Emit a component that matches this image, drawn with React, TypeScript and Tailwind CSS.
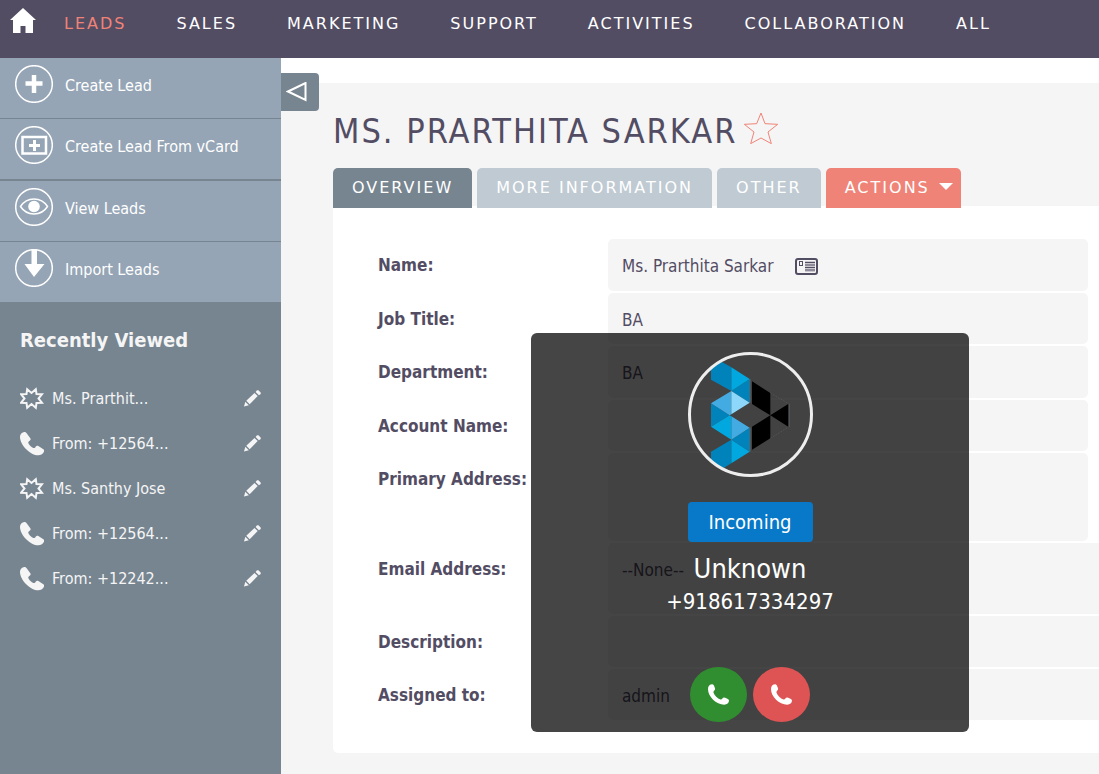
import type { ReactNode } from "react";

const navItems = ["Leads", "Sales", "Marketing", "Support", "Activities", "Collaboration", "All"];

const menuItems = [
  { label: "Create Lead", icon: <PlusIcon /> },
  { label: "Create Lead From vCard", icon: <VCardIcon /> },
  { label: "View Leads", icon: <EyeIcon /> },
  { label: "Import Leads", icon: <ImportIcon /> },
];

const recentItems = [
  { label: "Ms. Prarthit...", type: "lead" },
  { label: "From: +12564...", type: "call" },
  { label: "Ms. Santhy Jose", type: "lead" },
  { label: "From: +12564...", type: "call" },
  { label: "From: +12242...", type: "call" },
];

const fields: { label: string; value: ReactNode; height: string; wide?: boolean }[] = [
  {
    label: "Name:",
    value: (
      <>
        Ms. Prarthita Sarkar
        <button aria-label="Download vCard" className="ml-[22px]">
          <CardIcon />
        </button>
      </>
    ),
    height: "h-[52px]",
  },
  { label: "Job Title:", value: "BA", height: "h-[51px]" },
  { label: "Department:", value: "BA", height: "h-[52px]" },
  { label: "Account Name:", value: "", height: "h-[51px]" },
  { label: "Primary Address:", value: "", height: "h-[88px]" },
  { label: "Email Address:", value: "--None--", height: "h-[71px]", wide: true },
  { label: "Description:", value: "", height: "h-[51px]", wide: true },
  { label: "Assigned to:", value: "admin", height: "h-[51px]", wide: true },
];

function HomeIcon() {
  return (
    <svg viewBox="0 0 26 26" className="h-[26px] w-[26px]" fill="currentColor">
      <path d="M13 0 26 12h-3v13h-7.500v-7h-5v7H3V12H0z" />
    </svg>
  );
}

function RoundIcon({ children }: { children: ReactNode }) {
  return (
    <svg viewBox="0 0 38 38" className="h-[38px] w-[38px] shrink-0" fill="none" stroke="white">
      <circle cx="19" cy="19" r="18.300" strokeWidth="1.500" />
      {children}
    </svg>
  );
}

function PlusIcon() {
  return (
    <RoundIcon>
      <path d="M19 10v18M10.500 18.500h17" strokeWidth="4.500" />
    </RoundIcon>
  );
}

function VCardIcon() {
  return (
    <RoundIcon>
      <rect x="7.500" y="11" width="23.500" height="16.500" strokeWidth="2.500" />
      <path d="M19.500 14v11M14 19.500h11" strokeWidth="3" />
    </RoundIcon>
  );
}

function EyeIcon() {
  return (
    <RoundIcon>
      <path d="M5.500 18.500C12 8.500 26 8.500 32.500 18.500 26 28.500 12 28.500 5.500 18.500z" strokeWidth="1.500" />
      <circle cx="19" cy="18.500" r="5.800" fill="white" stroke="none" />
    </RoundIcon>
  );
}

function ImportIcon() {
  return (
    <RoundIcon>
      <path d="M16.500 0h5.500v15h7.500L19 28 9.500 15h7z" fill="white" stroke="none" />
    </RoundIcon>
  );
}

function BurstIcon() {
  return (
    <svg viewBox="0 0 24 24" className="h-6 w-6" fill="none" stroke="currentColor" strokeWidth="2">
      <path d="M7.200 2.300 11.500 6l4.300-3.700.7 4.700 5.500.2-3.500 4.300 3.500 4.300-5.500.2-.7 4.700-4.300-3.700-4.300 3.700-.7-4.700-5.500-.2 3.500-4.300L1 7.200l5.500-.2z" />
    </svg>
  );
}

function HandsetIcon() {
  return (
    <svg viewBox="0 0 72 72" className="h-6 w-6" fill="currentColor">
      <path d="M0 14C0 7 6 1 13 0c3 0 5 1 7 4l11 15c2 3 1 5-2 7-5 4-5 6-3 9 4 6 8 10 14 13 3 1 5 0 7-4 2-3 5-4 8-2l15 10c3 2 3 5 1 9-3 6-9 9-16 9C32 70 0 40 0 14z" />
    </svg>
  );
}

function CallIcon() {
  return (
    <svg viewBox="0 0 62 62" className="h-[21px] w-[21px]" fill="currentColor">
      <path d="M0 15C0 7 5 1 13 1c4 0 7 9 8 13 1 5-6 6-5 11 3 9 12 18 21 21 5 1 6-7 11-6 6 1 14 5 14 9 0 8-6 12-14 12C24 61 0 38 0 15z" />
    </svg>
  );
}

function PencilIcon() {
  return (
    <svg viewBox="0 0 17 17" className="h-[17px] w-[17px]" fill="currentColor">
      <path d="M0 16.500 1.300 11.800 4.800 15.300z" />
      <path d="M2.300 10.800 10.500 2.900 13.700 6.100 5.700 14.200z" />
      <path d="M11.600 1.900 12.800.6c.6-.6 1.300-.6 1.900 0L16.400 2.300c.6.6.6 1.300 0 1.900l-1.500 1z" />
    </svg>
  );
}

function StarIcon() {
  return (
    <svg viewBox="0 0 102 94" className="h-[32px] w-[34px]" fill="none" stroke="#f08377" strokeWidth="3">
      <path d="M51 2 63 34l38 2-29 23 10 35-31-17-31 17 10-35L1 36l37-2z" />
    </svg>
  );
}

function CardIcon() {
  return (
    <svg viewBox="0 0 23 17" className="block h-[17px] w-[23px]" fill="none" stroke="#534d64">
      <path d="M10 3h10v11H10z" fill="#534d64" fillOpacity=".25" stroke="none" />
      <rect x="1" y="1" width="21" height="15" rx="2" strokeWidth="2" />
      <rect x="4.500" y="3.500" width="3" height="4" />
      <path d="M10 4.500h10M10 7h10M10 9.500h10M10 12h10" strokeWidth="1.200" />
    </svg>
  );
}

function CallerLogo() {
  return (
    <svg viewBox="21 21 375 375" className="h-[125px] w-[125px]">
      <clipPath id="caller">
        <circle cx="208.500" cy="208.500" r="180" />
      </clipPath>
      <g clipPath="url(#caller)">
        <path fill="#0083ba" d="M90 32 151 67V138L90 104zM206 102V173L151 138zM90 175 146 211 90 245zM206 248V320L151 284zM151 284V355L90 392V320z" />
        <path fill="#00a8df" d="M151 67 206 102 151 138zM90 245 146 211 151 214V284zM151 284 206 320 151 355z" />
        <path fill="#44aae2" d="M151 138V208L146 211 90 175zM151 214 206 248 151 284z" />
        <path fill="#8dd8fa" d="M151 138 206 173 151 208z" />
        <path fill="#000" d="M213 109 268 144V211L213 177zM268 211 323 176V246zM213 245 268 211V280L213 314z" />
        <path fill="none" stroke="#777" strokeDasharray="5 4" d="M268 144 323 176M268 280 323 246" />
        <path fill="none" stroke="#6f7a80" strokeWidth="2" d="M207 102V173M207 248V320M324 176V246" />
      </g>
      <circle cx="208.500" cy="208.500" r="183" fill="none" stroke="#eee" strokeWidth="9" />
    </svg>
  );
}

function Sidebar() {
  return (
    <aside className="w-[281px] shrink-0 bg-[#778591] text-[#f5f5f5]">
      <ul className="bg-[#95a5b5] text-white">
        {menuItems.map((item) => (
          <li key={item.label} className="border-b border-[#778591] last:border-b-0 nth-2:border-b-2">
            <a href="#" className="flex h-[60px] items-start gap-3 px-[15px] pt-[7px]">
              {item.icon}
              <span className="pt-[9px] leading-6">{item.label}</span>
            </a>
          </li>
        ))}
      </ul>
      <div className="px-5 pt-[22px]">
        <h2 className="mb-5 text-xl font-bold leading-8">Recently Viewed</h2>
        <ul>
          {recentItems.map((item, index) => (
            <li key={index} className="flex h-[45px] items-center">
              {item.type === "lead" ? <BurstIcon /> : <HandsetIcon />}
              <a href="#" className="ml-2 flex-1">
                {item.label}
              </a>
              <button aria-label="Edit">
                <PencilIcon />
              </button>
            </li>
          ))}
        </ul>
      </div>
    </aside>
  );
}

function IncomingCall() {
  return (
    <div
      role="dialog"
      aria-label="Incoming call"
      className="absolute right-[130px] top-[333px] flex h-[399px] w-[438px] flex-col items-center rounded-[6px] bg-black/73 pt-[19px] text-white"
    >
      <CallerLogo />
      <button className="mt-[25px] h-10 w-[125px] rounded-[4px] bg-[#0879c9] text-xl">Incoming</button>
      <p className="mt-[10px] text-[27px] leading-[34px]">Unknown</p>
      <p className="text-[22px] leading-8">+918617334297</p>
      <div className="mt-[49px] flex gap-[6px]">
        <button
          aria-label="Answer"
          className="flex h-[55px] w-[57px] items-center justify-center rounded-[50%] bg-[#308e30]"
        >
          <CallIcon />
        </button>
        <button
          aria-label="Decline"
          className="flex h-[55px] w-[57px] items-center justify-center rounded-[50%] bg-[#de5455]"
        >
          <CallIcon />
        </button>
      </div>
    </div>
  );
}

export default function App() {
  const tab = "h-10 rounded-t-[5px] px-[19px] tracking-[2px] uppercase";

  return (
    <div className="relative flex min-h-screen flex-col overflow-x-hidden bg-[#f5f5f5] font-['DejaVu_Sans_Condensed','DejaVu_Sans',sans-serif] text-base text-[#534d64]">
      <header className="flex h-[58px] shrink-0 bg-[#534d64] pl-[10px] pt-2 text-white">
        <a href="#" aria-label="Home">
          <HomeIcon />
        </a>
        <nav className="ml-7 flex gap-[50px] font-['DejaVu_Sans',sans-serif] leading-8 tracking-[2px] uppercase">
          {navItems.map((item) => (
            <a key={item} href="#" className={item === "Leads" ? "text-[#f08377]" : ""}>
              {item}
            </a>
          ))}
        </nav>
      </header>

      <div className="flex flex-1">
        <Sidebar />
        <main className="min-w-0 flex-1">
          <div className="h-[25px] bg-white" />
          <div className="flex">
            <button
              aria-label="Collapse sidebar"
              className="-mt-[10px] flex h-[38px] w-[38px] shrink-0 items-center rounded-r-[4px] bg-[#778591] pl-[5px]"
            >
              <svg viewBox="0 0 21 20" className="h-5 w-[21px]" fill="none" stroke="white" strokeWidth="2">
                <path d="M2 9.500 19.500 1v17z" />
              </svg>
            </button>
            <div className="ml-[14px] min-w-0 flex-1">
              <div className="flex h-[85px] items-center gap-[7px] pt-[10px]">
                <h1 className="whitespace-nowrap text-[34px] leading-10 tracking-[2px] uppercase">Ms. Prarthita Sarkar</h1>
                <button aria-label="Add to favorites" className="mb-[6px]">
                  <StarIcon />
                </button>
              </div>
              <div className="relative z-10 -mb-[2px] flex gap-[5px] font-['DejaVu_Sans',sans-serif] text-white">
                <button className={`${tab} bg-[#778591]`}>Overview</button>
                <button className={`${tab} bg-[#bfcad3]`}>More Information</button>
                <button className={`${tab} bg-[#bfcad3]`}>Other</button>
                <button className="flex h-10 items-center gap-[9px] rounded-t-[5px] bg-[#f08377] pl-[19px] pr-2 tracking-[2px] uppercase">
                  Actions
                  <svg viewBox="0 0 14 7" className="mb-1 h-[7px] w-[14px]" fill="currentColor">
                    <path d="M0 0h14L7 7z" />
                  </svg>
                </button>
              </div>
              <dl className="flex flex-col gap-[2px] rounded-bl-[5px] bg-white pb-[33px] pl-[45px] pt-[33px] text-[17px]">
                {fields.map((field) => (
                  <div key={field.label} className={`flex ${field.height} ${field.wide ? "" : "pr-[11px]"}`}>
                    <dt className="w-[230px] shrink-0 whitespace-nowrap pt-[14px] font-bold leading-6">{field.label}</dt>
                    <dd
                      className={`flex flex-1 items-start bg-[#f5f5f5] pl-[14px] pt-[15px] leading-6 ${field.wide ? "rounded-l-[5px]" : "rounded-[5px]"}`}
                    >
                      <span className="flex items-center">{field.value}</span>
                    </dd>
                  </div>
                ))}
              </dl>
            </div>
          </div>
        </main>
      </div>

      <IncomingCall />
    </div>
  );
}
